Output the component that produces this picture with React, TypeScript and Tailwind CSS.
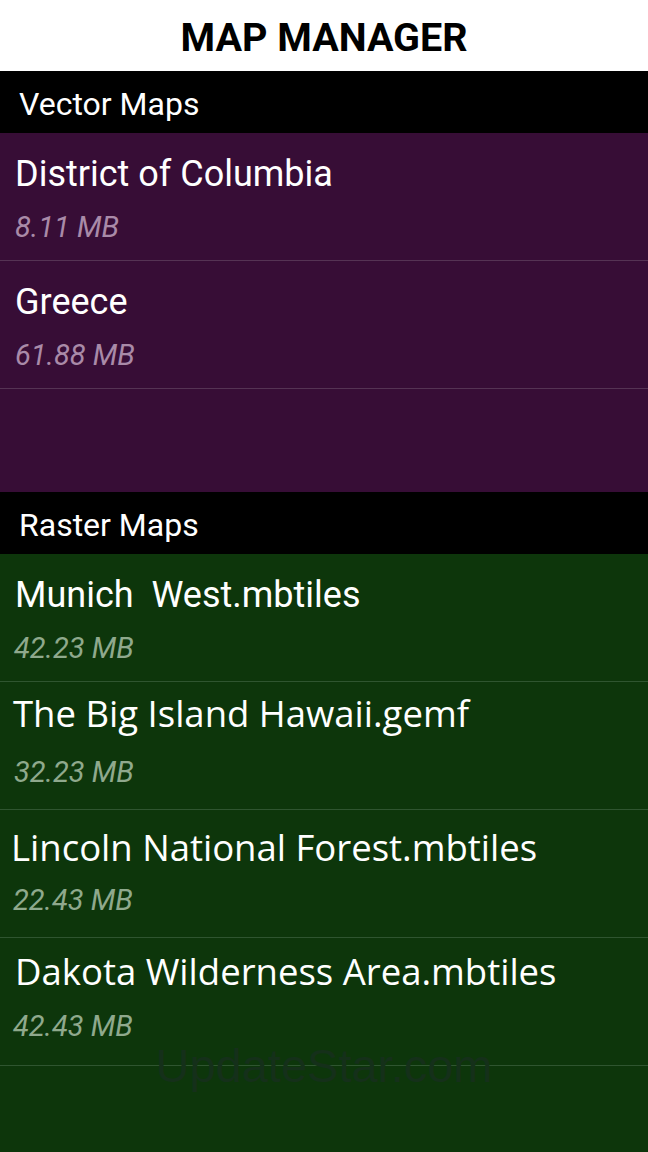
import React from "react";

type MapFile = {
  name: string;
  size: string;
  font: string;
  titleClass: string;
  sizeClass: string;
};

const vectorMaps: MapFile[] = [
  {
    name: "District of Columbia",
    size: "8.11 MB",
    font: "font-['Roboto',sans-serif] text-[36px] leading-[36px]",
    titleClass: "pt-[23px] pl-[15px]",
    sizeClass: "mt-[21px] pl-[15px]",
  },
  {
    name: "Greece",
    size: "61.88 MB",
    font: "font-['Roboto',sans-serif] text-[36px] leading-[36px]",
    titleClass: "pt-[23px] pl-[15px]",
    sizeClass: "mt-[21px] pl-[15px]",
  },
];

const rasterMaps: MapFile[] = [
  {
    name: "Munich  West.mbtiles",
    size: "42.23 MB",
    font: "font-['Roboto',sans-serif] text-[36px] leading-[36px]",
    titleClass: "pt-[23px] pl-[15px]",
    sizeClass: "mt-[21px] pl-[14px]",
  },
  {
    name: "The Big Island Hawaii.gemf",
    size: "32.23 MB",
    font: "font-['Open_Sans',sans-serif] text-[36.5px] leading-[36px]",
    titleClass: "pt-[13px] pl-[13px]",
    sizeClass: "mt-[27px] pl-[14px]",
  },
  {
    name: "Lincoln National Forest.mbtiles",
    size: "22.43 MB",
    font: "font-['Open_Sans',sans-serif] text-[36.5px] leading-[36px]",
    titleClass: "pt-[19px] pl-[11px]",
    sizeClass: "mt-[21px] pl-[13px]",
  },
  {
    name: "Dakota Wilderness Area.mbtiles",
    size: "42.43 MB",
    font: "font-['Open_Sans',sans-serif] text-[36.5px] leading-[36px]",
    titleClass: "pt-[15px] pl-[15px]",
    sizeClass: "mt-[23px] pl-[13px]",
  },
];

const SectionHeader: React.FC<{ title: string }> = ({ title }) => (
  <div className="flex h-[62px] items-center bg-black pl-[19px] pt-[3px] font-['Roboto',sans-serif] text-[32px] leading-none text-white">
    {title}
  </div>
);

const MapRow: React.FC<{ map: MapFile; divider: string; sizeColor: string }> = ({
  map,
  divider,
  sizeColor,
}) => (
  <div className={`flex h-[128px] flex-col border-b ${divider}`}>
    <div className={`${map.titleClass} ${map.font} whitespace-pre text-white`}>{map.name}</div>
    <div
      className={`${map.sizeClass} font-['Roboto',sans-serif] text-[29px] leading-[29px] italic ${sizeColor}`}
    >
      {map.size}
    </div>
  </div>
);

export default function App() {
  return (
    <div className="flex h-[1152px] w-[648px] flex-col overflow-hidden bg-white">
      <header className="flex h-[71px] items-center justify-center pt-[5px] font-['Roboto',sans-serif] text-[39.5px] leading-none font-bold text-black">
        MAP MANAGER
      </header>

      <SectionHeader title="Vector Maps" />
      <div className="flex h-[359px] flex-col bg-[#370d36]">
        {vectorMaps.map((m) => (
          <MapRow key={m.name} map={m} divider="border-[#553354]" sizeColor="text-[#a98aa8]" />
        ))}
      </div>

      <SectionHeader title="Raster Maps" />
      <div className="relative flex flex-1 flex-col bg-[#0d360b]">
        {rasterMaps.map((m) => (
          <MapRow key={m.name} map={m} divider="border-[#2f5530]" sizeColor="text-[#8fa98d]" />
        ))}
        {/* watermark */}
        <div className="pointer-events-none absolute left-0 right-0 top-[488px] text-center font-['Liberation_Sans',sans-serif] text-[47px] leading-none text-[#15301a]">
          UpdateStar.com
        </div>
      </div>
    </div>
  );
}
